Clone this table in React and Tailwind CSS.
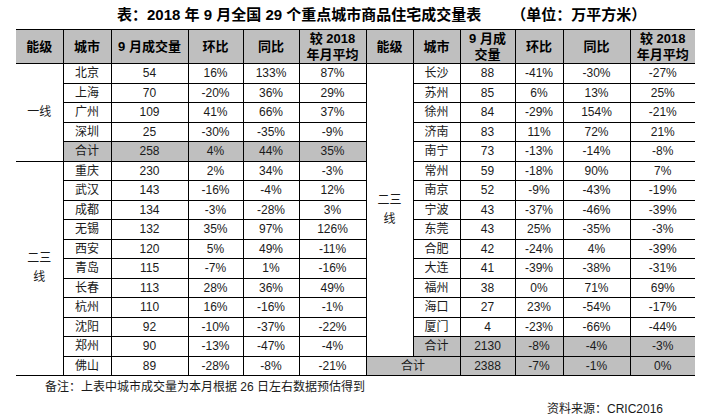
import React from 'react';

const leftRows = [
  ['北京', '54', '16%', '133%', '87%'],
  ['上海', '70', '-20%', '36%', '29%'],
  ['广州', '109', '41%', '66%', '37%'],
  ['深圳', '25', '-30%', '-35%', '-9%'],
  ['合计', '258', '4%', '44%', '35%'],
  ['重庆', '230', '2%', '34%', '-3%'],
  ['武汉', '143', '-16%', '-4%', '12%'],
  ['成都', '134', '-3%', '-28%', '3%'],
  ['无锡', '132', '35%', '97%', '126%'],
  ['西安', '120', '5%', '49%', '-11%'],
  ['青岛', '115', '-7%', '1%', '-16%'],
  ['长春', '113', '28%', '36%', '49%'],
  ['杭州', '110', '16%', '-16%', '-1%'],
  ['沈阳', '92', '-10%', '-37%', '-22%'],
  ['郑州', '90', '-13%', '-47%', '-4%'],
  ['佛山', '89', '-28%', '-8%', '-21%'],
];

const rightRows = [
  ['长沙', '88', '-41%', '-30%', '-27%'],
  ['苏州', '85', '6%', '13%', '25%'],
  ['徐州', '84', '-29%', '154%', '-21%'],
  ['济南', '83', '11%', '72%', '21%'],
  ['南宁', '73', '-13%', '-14%', '-8%'],
  ['常州', '59', '-18%', '90%', '7%'],
  ['南京', '52', '-9%', '-43%', '-19%'],
  ['宁波', '43', '-37%', '-46%', '-39%'],
  ['东莞', '43', '25%', '-35%', '-3%'],
  ['合肥', '42', '-24%', '4%', '-39%'],
  ['大连', '41', '-39%', '-38%', '-31%'],
  ['福州', '38', '0%', '71%', '69%'],
  ['海口', '27', '23%', '-54%', '-17%'],
  ['厦门', '4', '-23%', '-66%', '-44%'],
  ['合计', '2130', '-8%', '-4%', '-3%'],
  ['合计', '2388', '-7%', '-1%', '0%'],
];

const cell = 'border border-black p-0 text-center align-middle';
const grey = 'bg-[#bfbfbf]';

const App = () => {
  return (
    <div className="w-[712px] h-[415px] bg-white text-[#1a1a1a] font-['Liberation_Sans','Noto_Sans_CJK_SC',sans-serif] overflow-hidden">
      <div className="pt-[6px] pl-[117px] h-[29px] text-[15px] font-bold text-black leading-[18px] whitespace-pre">
        表：2018 年 9 月全国 29 个重点城市商品住宅成交量表<span className="ml-[30px]">（单位：万平方米）</span>
      </div>

      <table className="ml-[16px] w-[679px] table-fixed border-collapse text-[12px] leading-[16px]">
        <colgroup>
          <col className="w-[47px]" />
          <col className="w-[48px]" />
          <col className="w-[77px]" />
          <col className="w-[55px]" />
          <col className="w-[56px]" />
          <col className="w-[67px]" />
          <col className="w-[47px]" />
          <col className="w-[47px]" />
          <col className="w-[55px]" />
          <col className="w-[48px]" />
          <col className="w-[67px]" />
          <col className="w-[65px]" />
        </colgroup>
        <thead>
          <tr className="h-[34px] text-[13px] font-bold text-black">
            <th className={`${cell} ${grey} border-l-0`}>能级</th>
            <th className={`${cell} ${grey}`}>城市</th>
            <th className={`${cell} ${grey}`}>9 月成交量</th>
            <th className={`${cell} ${grey}`}>环比</th>
            <th className={`${cell} ${grey}`}>同比</th>
            <th className={`${cell} ${grey}`}>较 2018<br />年月平均</th>
            <th className={`${cell} ${grey}`}>能级</th>
            <th className={`${cell} ${grey}`}>城市</th>
            <th className={`${cell} ${grey}`}>9 月成<br />交量</th>
            <th className={`${cell} ${grey}`}>环比</th>
            <th className={`${cell} ${grey}`}>同比</th>
            <th className={`${cell} ${grey} border-r-0`}>较 2018<br />年月平均</th>
          </tr>
        </thead>
        <tbody>
          {leftRows.map((l, i) => {
            const r = rightRows[i];
            const leftGrey = i === 4 ? grey : '';
            const rightGrey = i >= 14 ? grey : '';
            return (
              <tr key={i} className="h-[19.5px]">
                {i === 0 && (
                  <td rowSpan={5} className={`${cell} border-l-0`}>一线</td>
                )}
                {i === 5 && (
                  <td rowSpan={11} className={`${cell} border-l-0 leading-[19px]`}>二三<br />线</td>
                )}
                {l.map((v, j) => (
                  <td key={j} className={`${cell} ${leftGrey}`}>{v}</td>
                ))}
                {i === 0 && (
                  <td rowSpan={15} className={`${cell} leading-[19px]`}>二三<br />线</td>
                )}
                {i === 15 ? (
                  <td colSpan={2} className={`${cell} ${grey}`}>{r[0]}</td>
                ) : (
                  <td className={`${cell} ${rightGrey}`}>{r[0]}</td>
                )}
                {r.slice(1).map((v, j) => (
                  <td key={j} className={`${cell} ${rightGrey} ${j === 3 ? 'border-r-0' : ''}`}>{v}</td>
                ))}
              </tr>
            );
          })}
        </tbody>
      </table>

      <div className="pl-[45px] pt-[4px] text-[12px] leading-[14px]">
        备注：上表中城市成交量为本月根据 26 日左右数据预估得到
      </div>
      <div className="pl-[547px] pt-[8px] text-[12px] leading-[14px]">
        资料来源：CRIC2016
      </div>
    </div>
  );
};

export default App;
